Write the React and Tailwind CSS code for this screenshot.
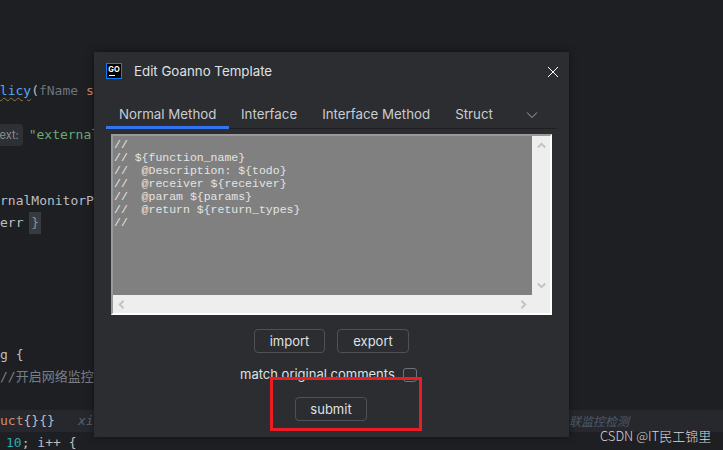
const mono = "font-['DejaVu_Sans_Mono','Noto_Sans_CJK_SC',monospace]";
const ui = "font-['Inter','Noto_Sans_CJK_SC',sans-serif]";

function CodeLine({ className = "", children }) {
  return <div className={`h-[22px] leading-[22px] whitespace-pre ${className}`}>{children}</div>;
}

function Button({ w, children }) {
  return (
    <button className={`${w} h-6 rounded-[4px] border border-[#4e5157] text-[13px] leading-none text-[#dfe1e5] flex items-center justify-center`}>
      {children}
    </button>
  );
}

function Chevron({ d }) {
  return (
    <svg width="9" height="9" viewBox="0 0 9 9" fill="none" stroke="#c4c4c4" strokeWidth="2">
      <path d={d} />
    </svg>
  );
}

const template = `//
// \${function_name}
//  @Description: \${todo}
//  @receiver \${receiver}
//  @param \${params}
//  @return \${return_types}
//`;

export default function App() {
  return (
    <div className={`relative w-[723px] h-[450px] overflow-hidden bg-[#1e1f22] ${mono} text-[13px] text-[#bcbec4]`}>
      <div className="pt-[80px]">
        <CodeLine><span className="ml-[-8px] text-[#56a8f5] underline decoration-wavy decoration-[#8a7a3c] decoration-1 underline-offset-2">olicy</span>(<span className="text-[#6f737a]">fName</span> <span className="text-[#cf8e6d]">string</span></CodeLine>
        <CodeLine />
        <CodeLine><span className="inline-block ml-[-8px] mr-[6px] px-1 rounded-[4px] bg-[#2f3033] text-[11px] text-[#8c8f94] font-['Inter']">text:</span><span className="text-[#6aab73]">"external</span></CodeLine>
        <CodeLine />
        <CodeLine />
        <CodeLine><span className="text-[#bcbec4]">rnalMonitorPolicy</span></CodeLine>
        <CodeLine>err <span className="inline-block bg-[#373b41] text-[#8c8f94] px-[2px] ml-[-2px]">{"}"}</span></CodeLine>
        <CodeLine />
        <CodeLine />
        <CodeLine />
        <CodeLine />
        <CodeLine />
        <CodeLine>g {"{"}</CodeLine>
        <CodeLine className="text-[#7a7e85]">//开启网络监控开关</CodeLine>
        <CodeLine />
        <CodeLine className="bg-[#26282e] relative">
          <span className="text-[#cf8e6d]">uct</span>{"{}{}"}
          <span className="absolute left-[78px] top-0 italic text-[#5a6270]">xi</span>
          <span className="absolute left-[569px] top-0 italic text-[#4f5a6b] font-['Noto_Sans_CJK_SC'] text-[12px]">联监控检测</span>
        </CodeLine>
        <CodeLine><span className="text-[#2aacb8] ml-[6px]">10</span>; i++ {"{"}</CodeLine>
      </div>

      <div className={`absolute left-[94px] top-[52px] w-[475px] h-[385px] bg-[#2b2d30] shadow-[0_0_8px_rgba(0,0,0,0.45)] flex flex-col ${ui}`}>
        <div className="h-[38px] shrink-0 pl-3 pr-[10px] pt-[11px] flex items-start">
          <svg width="16" height="16" viewBox="0 0 16 16" className="shrink-0">
            <rect x="0.5" y="0.5" width="15" height="15" fill="#000" stroke="#087cfa" />
            <text x="8" y="9" textAnchor="middle" fill="#fff" fontSize="7.5" fontWeight="700" fontFamily="Inter">GO</text>
            <rect x="3" y="12" width="6" height="1" fill="#fff" />
          </svg>
          <span className="ml-3 text-[13.3px] leading-4 text-[#dfe1e5]">Edit Goanno Template</span>
          <svg width="12" height="12" viewBox="0 0 12 12" stroke="#fff" strokeWidth="1" className="ml-auto mt-[3px]">
            <path d="M1 1L11 11M11 1L1 11" />
          </svg>
        </div>

        <div className="mt-[13px] mx-3 h-[26px] shrink-0 flex border-b border-[#1e1f22] text-[13.3px] text-[#c9ccd1] w-[451px]">
          <div className="w-[123px] h-[26px] border-b-[3px] border-[#3574f0] pl-[13px] leading-[22px]">Normal Method</div>
          <div className="ml-3 leading-[22px]">Interface</div>
          <div className="ml-[25px] leading-[22px]">Interface Method</div>
          <div className="ml-[25px] leading-[22px]">Struct</div>
          <svg width="12" height="12" viewBox="0 0 12 12" fill="none" stroke="#a8abb0" strokeWidth="1" className="ml-[33px] mt-[6px]">
            <path d="M1 3.5L6 8.5L11 3.5" />
          </svg>
        </div>

        <div className="mt-[5px] ml-[17px] w-[441px] h-[181px] shrink-0 border-2 border-[#9a9a9a] border-r-white border-b-white flex flex-col">
          <div className="flex flex-1 min-h-0">
            <pre className="flex-1 bg-[#808080] pl-[1px] pt-[2px] [font-family:'Liberation_Mono',monospace] text-[11.5px] leading-[13px] text-[#e4e4e4]">{template}</pre>
            <div className="w-[18px] bg-[#eeeeee] flex flex-col items-center justify-between py-[5px]">
              <Chevron d="M0.8 6.5L4.5 2.8L8.2 6.5" />
              <Chevron d="M0.8 2.5L4.5 6.2L8.2 2.5" />
            </div>
          </div>
          <div className="h-[18px] shrink-0 bg-[#eeeeee] flex items-center justify-between pl-[4px] pr-[22px]">
            <Chevron d="M6.5 0.8L2.8 4.5L6.5 8.2" />
            <Chevron d="M2.5 0.8L6.2 4.5L2.5 8.2" />
          </div>
        </div>

        <div className="mt-[14px] flex justify-center gap-3 shrink-0">
          <Button w="w-[71px]">import</Button>
          <Button w="w-[72px]">export</Button>
        </div>

        <div className="mt-[15px] h-[14px] flex items-center pl-[146px] shrink-0 text-[13px] text-[#dfe1e5]">
          <span className="leading-[14px] mt-[-3px]">match original comments</span>
          <span className="ml-2 w-[14px] h-[14px] rounded-[3px] border border-[#6f737a]" />
        </div>

        <div className="mt-[15px] pl-[201px] shrink-0">
          <Button w="w-[72px]">submit</Button>
        </div>
      </div>

      <div className="absolute left-[270px] top-[377px] w-[152px] h-[54px] border-[3px] border-[#ec1c24]" />

      <div className="absolute left-[600px] top-[427px] text-[13px] leading-[18px] font-light text-[#d8d8d8] font-['Noto_Sans_CJK_SC',sans-serif] whitespace-nowrap">CSDN @IT民工锦里</div>
    </div>
  );
}
